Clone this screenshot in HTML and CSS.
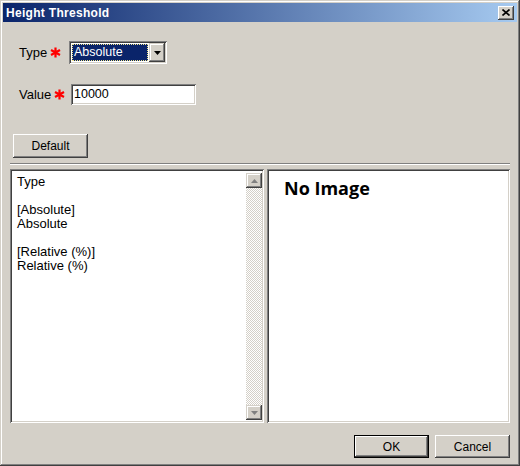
FILE: index.html
```html
<!DOCTYPE html>
<html>
<head>
<meta charset="utf-8">
<link rel="stylesheet" href="styles.css">
</head>
<body>
<div class="window">
  <div class="titlebar">
    <span class="title">Height Threshold</span>
    <span class="close"><svg width="8" height="7" viewBox="0 0 8 7"><path d="M0.5 0.5L7.5 6.5M7.5 0.5L0.5 6.5" stroke="#000" stroke-width="1.6" fill="none"/></svg></span>
  </div>
  <div class="body">
    <div class="field">
      <div class="label">Type<svg class="req" width="11" height="11" viewBox="0 0 11 11"><path d="M5.5 0.5V10.5M1 3L10 8M10 3L1 8" stroke="#ff0000" stroke-width="2.2" fill="none"/></svg></div>
      <div class="combo">
        <div class="combo-value"><span class="sel">Absolute</span></div>
        <div class="combo-btn"><svg width="7" height="4" viewBox="0 0 7 4"><path d="M0 0H7L3.5 4Z" fill="#000"/></svg></div>
      </div>
    </div>
    <div class="field field-value">
      <div class="label">Value<svg class="req" width="11" height="11" viewBox="0 0 11 11"><path d="M5.5 0.5V10.5M1 3L10 8M10 3L1 8" stroke="#ff0000" stroke-width="2.2" fill="none"/></svg></div>
      <div class="textbox">10000</div>
    </div>
    <div class="btn btn-default">Default</div>
    <div class="sep"></div>
    <div class="panels">
      <div class="panel list">
        <div class="list-text">Type<br><br>[Absolute]<br>Absolute<br><br>[Relative (%)]<br>Relative (%)</div>
        <div class="scrollbar">
          <div class="sb-btn"><svg width="7" height="4" viewBox="0 0 7 4"><path d="M3.5 0L7 4H0Z" fill="#808080"/></svg></div>
          <div class="sb-track"></div>
          <div class="sb-btn"><svg width="7" height="4" viewBox="0 0 7 4"><path d="M0 0H7L3.5 4Z" fill="#808080"/></svg></div>
        </div>
      </div>
      <div class="panel preview">
        <div class="noimage">No Image</div>
      </div>
    </div>
    <div class="actions">
      <div class="btn btn-ok">OK</div>
      <div class="btn btn-cancel">Cancel</div>
    </div>
  </div>
</div>
</body>
</html>
```

FILE: styles.css
```css
* { box-sizing: border-box; }
html, body { margin: 0; padding: 0; }
body {
  background: #d4d0c8;
  font-family: "Liberation Sans", Arial, sans-serif;
  font-size: 12px;
  color: #000;
}
.window {
  width: 520px;
  height: 466px;
  background: #d4d0c8;
  padding: 3px;
  box-shadow: inset -1px -1px #404040, inset 1px 1px #d4d0c8, inset -2px -2px #808080, inset 2px 2px #ffffff;
  display: flex;
  flex-direction: column;
}
.titlebar {
  height: 19px;
  background: linear-gradient(to right, #0a246a, #a6caf0);
  display: flex;
  align-items: center;
  justify-content: space-between;
  padding: 0 3px 0 3px;
}
.title {
  color: #fff;
  font-weight: bold;
  font-size: 12px;
  letter-spacing: 0.3px;
}
.close {
  width: 16px;
  height: 14px;
  background: #d4d0c8;
  box-shadow: inset -1px -1px #404040, inset 1px 1px #ffffff, inset -2px -2px #808080;
  display: flex;
  align-items: center;
  justify-content: center;
}
.body {
  flex: 1;
  padding: 0 7px;
  display: flex;
  flex-direction: column;
}
.field {
  display: flex;
  align-items: center;
  margin: 19px 0 0 9px;
}
.field-value { margin-top: 20px; }
.label {
  width: 50px;
  display: flex;
  align-items: center;
  gap: 3px;
  font-size: 13px;
}
.field-value .label { width: 52px; }
.req { display: block; }
.combo {
  width: 98px;
  height: 23px;
  background: #fff;
  padding: 2px;
  box-shadow: inset 1px 1px #808080, inset -1px -1px #ffffff, inset 2px 2px #404040, inset -2px -2px #d4d0c8;
  display: flex;
}
.combo-value {
  flex: 1;
  padding: 1px;
  display: flex;
}
.sel {
  flex: 1;
  background: #0a246a;
  color: #fff;
  border: 1px dotted #f2e58a;
  line-height: 15px;
  padding-left: 1px;
  font-size: 12.5px;
}
.combo-btn {
  width: 16px;
  background: #d4d0c8;
  box-shadow: inset -1px -1px #404040, inset 1px 1px #d4d0c8, inset -2px -2px #808080, inset 2px 2px #ffffff;
  display: flex;
  align-items: center;
  justify-content: center;
}
.textbox {
  width: 125px;
  height: 21px;
  background: #fff;
  padding: 3px 3px;
  line-height: 15px;
  font-size: 12.5px;
  box-shadow: inset 1px 1px #808080, inset -1px -1px #ffffff, inset 2px 2px #404040, inset -2px -2px #d4d0c8;
}
.btn {
  width: 75px;
  height: 23px;
  display: flex;
  align-items: center;
  justify-content: center;
  background: #d4d0c8;
  box-shadow: inset -1px -1px #404040, inset 1px 1px #ffffff, inset -2px -2px #808080, inset 2px 2px #d4d0c8;
}
.btn-default {
  margin: 29px 0 0 3px;
  height: 24px;
}
.btn-ok {
  box-shadow: inset 0 0 0 1px #000, inset -2px -2px #404040, inset 2px 2px #ffffff, inset -3px -3px #808080;
}
.sep {
  margin-top: 5px;
  height: 2px;
  border-top: 1px solid #808080;
  border-bottom: 1px solid #ffffff;
}
.panels {
  margin-top: 4px;
  height: 254px;
  display: flex;
  gap: 3px;
}
.panel {
  background: #fff;
  box-shadow: inset 1px 1px #808080, inset -1px -1px #ffffff, inset 2px 2px #404040, inset -2px -2px #d4d0c8;
  padding: 2px;
}
.list {
  width: 254px;
  display: flex;
  padding: 4px 2px 3px 2px;
}
.list-text {
  flex: 1;
  padding: 2px 0 0 5px;
  line-height: 14px;
  font-size: 13px;
}
.scrollbar {
  width: 16px;
  display: flex;
  flex-direction: column;
}
.sb-btn {
  height: 15px;
  background: #d4d0c8;
  box-shadow: inset -1px -1px #404040, inset 1px 1px #d4d0c8, inset -2px -2px #808080, inset 2px 2px #ffffff;
  display: flex;
  align-items: center;
  justify-content: center;
}
.sb-track {
  flex: 1;
  background: repeating-conic-gradient(#ffffff 0 25%, #d4d0c8 0 50%) 0 0 / 2px 2px;
}
.preview {
  flex: 1;
  padding: 7px 0 0 17px;
}
.noimage {
  font-family: "Open Sans", sans-serif;
  font-weight: bold;
  font-size: 18px;
  line-height: 24px;
}
.actions {
  margin-top: 12px;
  display: flex;
  justify-content: flex-end;
  gap: 6px;
}
```
